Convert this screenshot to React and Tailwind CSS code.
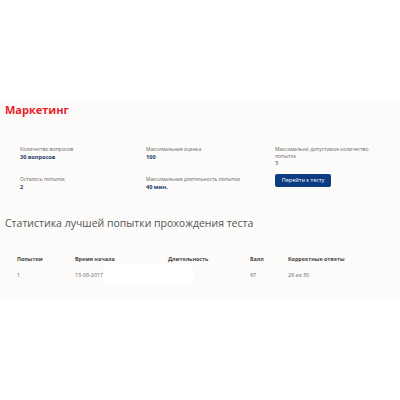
export default function App() {
  const font = { fontFamily: '"Open Sans", sans-serif' };
  return (
    <div className="w-[400px] h-[400px] bg-white overflow-hidden" style={font}>
      <div className="h-[100px]" />
      <div className="h-[198px] bg-[#fcfbf9] pt-[3px]">
        <h1 className="ml-[5px] text-[11px] leading-[14px] font-bold text-[#e8232c]">Маркетинг</h1>
        <div className="mt-[29px] ml-[20px] grid grid-cols-[126px_129px_1fr] gap-y-[9px]">
          <div className="h-[19px]">
            <div className="text-[5px] leading-[7px] text-[#666]">Количество вопросов</div>
            <div className="text-[5.6px] leading-[8px] font-bold text-[#1b3a6b]">30 вопросов</div>
          </div>
          <div>
            <div className="text-[5px] leading-[7px] text-[#666]">Максимальная оценка</div>
            <div className="text-[5.6px] leading-[8px] font-bold text-[#1b3a6b]">100</div>
          </div>
          <div>
            <div className="text-[5px] leading-[7px] text-[#666] w-[95px]">Максимально допустимое количество попыток</div>
            <div className="text-[5.6px] leading-[7px] text-[#1b3a6b]">3</div>
          </div>
          <div>
            <div className="text-[5px] leading-[7px] text-[#666]">Осталось попыток</div>
            <div className="text-[5.6px] leading-[8px] font-bold text-[#1b3a6b]">2</div>
          </div>
          <div>
            <div className="text-[5px] leading-[7px] text-[#666]">Максимальная длительность попытки</div>
            <div className="text-[5.6px] leading-[8px] font-bold text-[#1b3a6b]">40 мин.</div>
          </div>
          <div className="-mt-[2px]">
            <button className="block w-[56px] h-[13px] rounded-[2px] bg-[#0d3b82] text-white text-[5.5px] leading-[13px] text-center">Перейти к тесту</button>
          </div>
        </div>
        <h2 className="mt-[25px] ml-[5px] text-[10.5px] leading-[14px] text-[#555]">Статистика лучшей попытки прохождения теста</h2>
        <div className="mt-[24px] ml-[17px] grid grid-cols-[58px_93px_82px_38px_1fr] items-center text-[5.4px]">
          <div className="font-bold text-[#444] leading-[10px]">Попытки</div>
          <div className="font-bold text-[#444] leading-[10px]">Время начала</div>
          <div className="font-bold text-[#444] leading-[10px]">Длительность</div>
          <div className="font-bold text-[#444] leading-[10px]">Балл</div>
          <div className="font-bold text-[#444] leading-[10px]">Корректные ответы</div>
          <div className="text-[#666] leading-[10px] mt-[1px]">1</div>
          <div className="text-[#666] leading-[10px] mt-[1px] flex items-center">
            <span className="w-[32px] whitespace-nowrap">13-09-2017</span>
            <div className="w-[90px] h-[19px] bg-white shrink-0" />
          </div>
          <div className="mt-[1px]" />
          <div className="text-[#666] leading-[10px] mt-[1px]">97</div>
          <div className="text-[#666] leading-[10px] mt-[1px]">29 из 30</div>
        </div>
      </div>
    </div>
  );
}
